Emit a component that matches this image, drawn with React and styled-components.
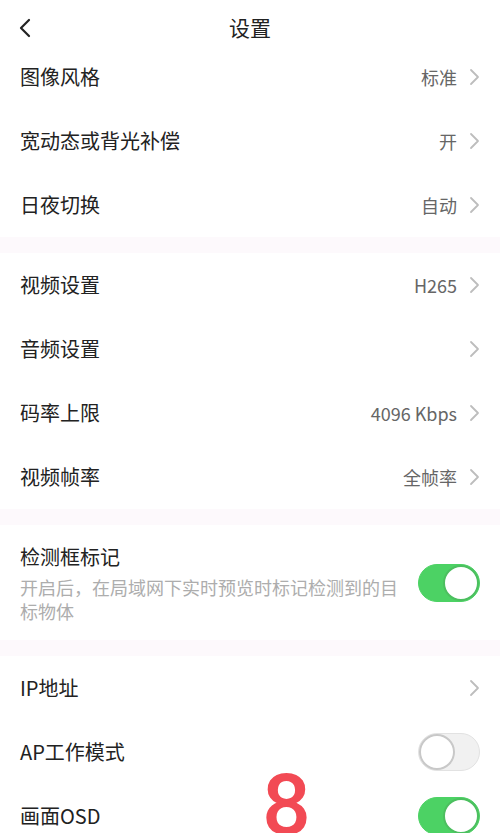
import React from "react";
import styled, { createGlobalStyle } from "styled-components";

const GlobalStyle = createGlobalStyle`
  html, body {
    margin: 0;
    padding: 0;
    background: #ffffff;
    overflow: hidden;
  }
  body {
    font-family: "Noto Sans CJK SC", "Noto Sans", sans-serif;
    color: #222222;
  }
`;

const Page = styled.div`
  position: relative;
  width: 500px;
  height: 833px;
  overflow: hidden;
  background: #ffffff;
`;

const Header = styled.header`
  position: relative;
  height: 45px;
  display: flex;
  align-items: flex-start;
  justify-content: center;
  padding-top: 11px;
  box-sizing: border-box;
`;

const BackButton = styled.div`
  position: absolute;
  left: 16px;
  top: 17px;
  width: 18px;
  height: 22px;
  display: flex;
  align-items: center;
  justify-content: center;
`;

const Title = styled.h1`
  margin: 0;
  font-size: 21px;
  font-weight: 400;
  line-height: 32px;
  color: #222222;
`;

const Group = styled.section`
  background: #ffffff;
`;

const Divider = styled.div`
  height: 16px;
  background: #fdf9fc;
`;

const Row = styled.div`
  height: ${(p) => (p.$tall ? 115 : 64)}px;
  display: flex;
  align-items: center;
  padding: 0 20px;
  box-sizing: border-box;
`;

const Label = styled.div`
  flex: 1;
  font-size: 20px;
  line-height: 28px;
  color: #222222;
`;

const TextBlock = styled.div`
  flex: 1;
  display: flex;
  flex-direction: column;
`;

const Desc = styled.div`
  max-width: 386px;
  margin-top: 4px;
  font-size: 18px;
  line-height: 24px;
  color: #adadad;
`;

const Value = styled.span`
  font-size: 18px;
  color: #666666;
  margin-right: 12px;
`;

const Track = styled.div`
  position: relative;
  width: 62px;
  height: 38px;
  border-radius: 19px;
  box-sizing: border-box;
  background: ${(p) => (p.$on ? "#4cd264" : "#f1f1f1")};
  border: 1px solid ${(p) => (p.$on ? "#4cd264" : "#e2e2e2")};
  flex-shrink: 0;
`;

const Knob = styled.div`
  position: absolute;
  top: 0;
  ${(p) => (p.$on ? "right: 0;" : "left: 0;")}
  width: 36px;
  height: 36px;
  border-radius: 50%;
  background: #ffffff;
  box-sizing: border-box;
  border: 2px solid ${(p) => (p.$on ? "#4cbf5f" : "#c8c8c8")};
`;

const Mark = styled.div`
  position: absolute;
  left: 262px;
  top: 762px;
  font-family: "Roboto", "Liberation Sans", sans-serif;
  font-weight: 500;
  font-size: 86px;
  line-height: 1;
  color: #f24a54;
  pointer-events: none;
`;

const Chevron = () => (
  <svg width="11" height="18" viewBox="0 0 11 18">
    <polyline
      points="2,2 9,9 2,16"
      fill="none"
      stroke="#bdbdbd"
      strokeWidth="1.8"
      strokeLinecap="round"
      strokeLinejoin="round"
    />
  </svg>
);

const Switch = ({ on }) => (
  <Track $on={on}>
    <Knob $on={on} />
  </Track>
);

const LinkRow = ({ label, value }) => (
  <Row>
    <Label>{label}</Label>
    {value && <Value>{value}</Value>}
    <Chevron />
  </Row>
);

const SwitchRow = ({ label, on }) => (
  <Row>
    <Label>{label}</Label>
    <Switch on={on} />
  </Row>
);

export default function App() {
  return (
    <Page>
      <GlobalStyle />
      <Header>
        <BackButton>
          <svg width="14" height="20" viewBox="0 0 14 20">
            <polyline
              points="11,2 3,10 11,18"
              fill="none"
              stroke="#222"
              strokeWidth="2.2"
              strokeLinecap="round"
              strokeLinejoin="round"
            />
          </svg>
        </BackButton>
        <Title>设置</Title>
      </Header>
      <Group>
        <LinkRow label="图像风格" value="标准" />
        <LinkRow label="宽动态或背光补偿" value="开" />
        <LinkRow label="日夜切换" value="自动" />
      </Group>
      <Divider />
      <Group>
        <LinkRow label="视频设置" value="H265" />
        <LinkRow label="音频设置" />
        <LinkRow label="码率上限" value="4096 Kbps" />
        <LinkRow label="视频帧率" value="全帧率" />
      </Group>
      <Divider />
      <Group>
        <Row $tall>
          <TextBlock>
            <Label>检测框标记</Label>
            <Desc>开启后，在局域网下实时预览时标记检测到的目标物体</Desc>
          </TextBlock>
          <Switch on />
        </Row>
      </Group>
      <Divider />
      <Group>
        <LinkRow label="IP地址" />
        <SwitchRow label="AP工作模式" on={false} />
        <SwitchRow label="画面OSD" on />
      </Group>
      <Mark>8</Mark>
    </Page>
  );
}
